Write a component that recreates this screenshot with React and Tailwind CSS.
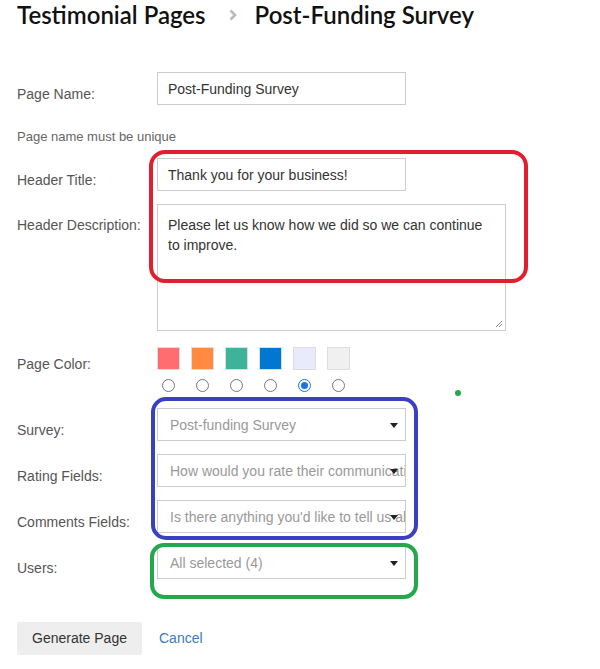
import React from "react";

const labelCls = "w-[140px] shrink-0 text-[14px] leading-4 text-[#555]";

function Select({ text }) {
  return (
    <div className="relative h-[33px] w-[249px] overflow-hidden border border-[#ccc] bg-white">
      <div className="whitespace-nowrap pl-[12px] pt-[7px] text-[14px] leading-[18px] text-[#999]">{text}</div>
      <div className="absolute right-[7px] top-[14px] h-0 w-0 border-l-[4px] border-r-[4px] border-t-[5px] border-l-transparent border-r-transparent border-t-[#222]" />
    </div>
  );
}

function Row({ label, labelPt, children, className = "" }) {
  return (
    <div className={"flex items-start " + className}>
      <div className={labelCls} style={{ paddingTop: labelPt }}>{label}</div>
      {children}
    </div>
  );
}

export default function App() {
  const colors = ["#ff6d70", "#ff8a40", "#3db39a", "#0078cf", "#e8ebfc", "#f0f0f0"];
  return (
    <div className="relative h-[669px] w-[600px] overflow-hidden bg-white font-['Liberation_Sans',Arial,sans-serif]">
      <div className="flex h-[30px] items-center pl-[17px] font-['Lato',sans-serif] text-[24px] font-semibold leading-[28px] text-[#111]">
        <span>Testimonial Pages</span>
        <svg className="ml-[22px] mr-[17px]" width="10" height="12" viewBox="0 0 10 12">
          <path d="M2.5 1.5 L7 6 L2.5 10.5" fill="none" stroke="#bbb" strokeWidth="2.6" />
        </svg>
        <span>Post-Funding Survey</span>
      </div>

      <div className="flex flex-col pl-[17px]">
        <Row label="Page Name:" labelPt="14px" className="mt-[42px]">
          <div className="h-[33px] w-[249px] border border-[#ccc] pl-[10px] pt-[7px] text-[14px] leading-[18px] text-[#333]">Post-Funding Survey</div>
        </Row>
        <div className="mt-[24px] text-[13px] leading-4 text-[#666]">Page name must be unique</div>
        <Row label="Header Title:" labelPt="14px" className="mt-[13px]">
          <div className="h-[33px] w-[249px] border border-[#ccc] pl-[10px] pt-[7px] text-[14px] leading-[18px] text-[#333]">Thank you for your business!</div>
        </Row>
        <Row label="Header Description:" labelPt="13px" className="mt-[13px]">
          <div className="relative h-[127px] w-[349px] border border-[#ccc] px-[10px] pt-[10px] text-[14px] leading-[20px] text-[#333]">
            Please let us know how we did so we can continue to improve.
            <svg className="absolute bottom-[2px] right-[2px]" width="8" height="8" viewBox="0 0 8 8">
              <path d="M7 1 L1 7 M7 4 L4 7" stroke="#888" strokeWidth="1" />
            </svg>
          </div>
        </Row>
        <Row label="Page Color:" labelPt="9px" className="mt-[16px]">
          <div className="flex flex-col">
            <div className="flex gap-[11px]">
              {colors.map((c, i) => (
                <div key={i} className="h-[23px] w-[23px] border border-[#ddd]" style={{ backgroundColor: c }} />
              ))}
            </div>
            <div className="mt-[9px] flex gap-[21px] pl-[5px]">
              {colors.map((c, i) =>
                i === 4 ? (
                  <div key={i} className="flex h-[13px] w-[13px] items-center justify-center rounded-full border border-[#1a73e8]">
                    <div className="h-[7px] w-[7px] rounded-full bg-[#1a73e8]" />
                  </div>
                ) : (
                  <div key={i} className="h-[13px] w-[13px] rounded-full border border-[#777]" />
                )
              )}
            </div>
          </div>
        </Row>
        <Row label="Survey:" labelPt="14px" className="mt-[16px]">
          <Select text="Post-funding Survey" />
        </Row>
        <Row label="Rating Fields:" labelPt="14px" className="mt-[13px]">
          <Select text="How would you rate their communication?" />
        </Row>
        <Row label="Comments Fields:" labelPt="14px" className="mt-[13px]">
          <Select text="Is there anything you'd like to tell us about" />
        </Row>
        <Row label="Users:" labelPt="14px" className="mt-[13px]">
          <Select text="All selected (4)" />
        </Row>
        <div className="mt-[43px] flex items-center">
          <div className="flex h-[33px] w-[125px] items-center justify-center rounded-[2px] bg-[#eeeeee] text-[14px] text-[#333]">Generate Page</div>
          <div className="ml-[17px] text-[14px] text-[#3a7bbf]">Cancel</div>
        </div>
      </div>

      {/* annotation overlays */}
      <div className="pointer-events-none absolute left-[149px] top-[150px] h-[133px] w-[379px] rounded-[16px] border-[4px] border-[#e41f2d]" />
      <div className="pointer-events-none absolute left-[151px] top-[397px] h-[143px] w-[267px] rounded-[15px] border-[4px] border-[#3a40c0]" />
      <div className="pointer-events-none absolute left-[150px] top-[543px] h-[56px] w-[268px] rounded-[14px] border-[4px] border-[#25a84c]" />
      <div className="pointer-events-none absolute left-[455px] top-[390px] h-[6px] w-[6px] rounded-full bg-[#25a84c]" />
    </div>
  );
}
